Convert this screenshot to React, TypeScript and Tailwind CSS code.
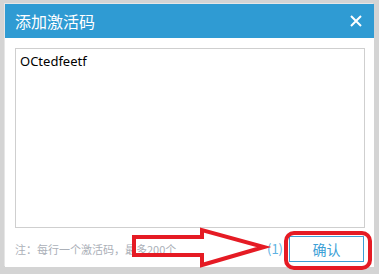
import React from 'react';

const cjk = { fontFamily: '"Noto Sans CJK SC", "Noto Sans", sans-serif' };

const App: React.FC = () => {
  return (
    <div className="relative w-[379px] h-[274px] overflow-hidden bg-[#d4d4d4] pt-[4px] pl-[5px]" style={cjk}>
      <div className="w-[369px] h-[263px] bg-white flex flex-col shadow-[-1px_-1px_0_#e6e6e6]">
        {/* title bar */}
        <div className="h-[34px] bg-[#2f9bd3] flex items-center justify-between pl-[10px] pr-[12px]">
          <span className="text-white text-[16px] leading-none">添加激活码</span>
          <svg width="12" height="12" viewBox="0 0 12 12" className="block">
            <path d="M1 1 L11 11 M11 1 L1 11" stroke="#fff" strokeWidth="2" />
          </svg>
        </div>

        {/* body */}
        <div className="px-[10px] pt-[10px] flex flex-col">
          <div className="w-[350px] h-[180px] border border-[#cfcfcf] px-[4px] pt-[4px]">
            <div
              className="text-[13px] leading-[16px] text-black"
              style={{ fontFamily: '"Noto Sans", sans-serif' }}
            >
              OCtedfeetf
            </div>
          </div>
          <div className="mt-[8px] flex items-center justify-between h-[26px]">
            <span className="text-[11px] text-[#abb0b8]">注：每行一个激活码，最多200个</span>
            <div className="flex items-center gap-[6px]">
              <span className="text-[13px] text-[#5fb2e3]">(1)</span>
              <button className="w-[75px] h-[26px] border border-[#3d9fd6] text-[#3d9fd6] text-[14px] bg-white">
                确认
              </button>
            </div>
          </div>
        </div>
      </div>

      {/* red annotation */}
      <svg className="absolute left-0 top-0" width="379" height="274" viewBox="0 0 379 274">
        <polygon
          points="134,237 202,237 202,230 264,247 202,265 202,255 134,255"
          fill="none"
          stroke="#e51b24"
          strokeWidth="4"
          strokeLinejoin="miter"
        />
        <rect x="286" y="233" width="84" height="35" rx="8" fill="none" stroke="#e51b24" strokeWidth="4" />
      </svg>
    </div>
  );
};

export default App;
